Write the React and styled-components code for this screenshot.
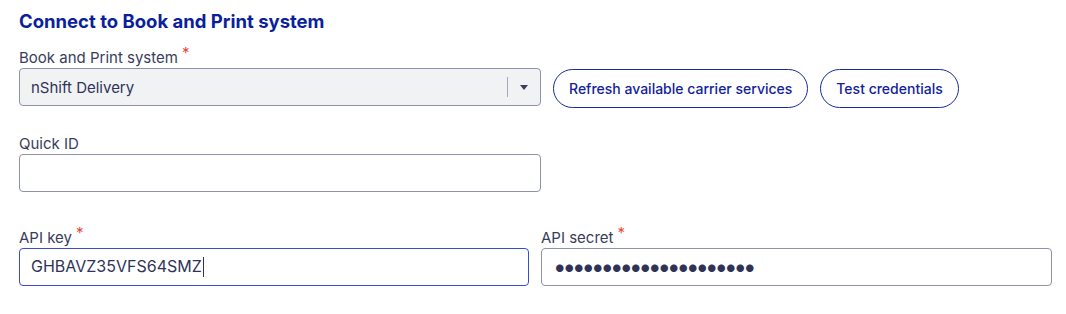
import React from 'react';
import styled, { createGlobalStyle } from 'styled-components';

const GlobalStyle = createGlobalStyle`
  body {
    margin: 0;
    background: #ffffff;
    font-family: Inter, "Noto Sans", "Liberation Sans", sans-serif;
  }
`;

const Page = styled.div`
  padding: 10px 14px 0 19px;
  width: 1033px;
`;

const Title = styled.h2`
  margin: 0 0 16px;
  font-size: 18.5px;
  line-height: 22px;
  font-weight: 700;
  color: #0b1f9c;
`;

const Row = styled.div`
  display: flex;
  align-items: flex-start;
  gap: 12px;
  margin-bottom: ${(p) => p.$mb || 0}px;
`;

const Field = styled.div`
  display: flex;
  flex-direction: column;
  width: ${(p) => p.$w}px;
`;

const Label = styled.label`
  font-size: 15px;
  line-height: 20px;
  color: #393d5c;
`;

const Required = styled.span`
  color: #e8473d;
  font-size: 15px;
  margin-left: 4px;
  position: relative;
  top: -5px;
`;

const Box = styled.div`
  box-sizing: border-box;
  height: 38px;
  display: flex;
  align-items: center;
  border: 1px solid ${(p) => (p.$focus ? '#3a4bd3' : '#8e93aa')};
  border-radius: 4px;
  background: ${(p) => (p.$disabled ? '#f1f2f4' : '#ffffff')};
  padding-left: 11px;
  font-size: ${(p) => p.$size || 15}px;
  color: #3a3e5e;
`;

const Input = styled.input`
  box-sizing: border-box;
  height: 38px;
  width: 100%;
  border: 1px solid #8e93aa;
  border-radius: 4px;
  background: #ffffff;
  padding: 0 11px;
  font-family: inherit;
  font-size: 15px;
  color: #2f3457;
  outline: none;
`;

const Value = styled.span`
  flex: 1;
  color: #2f3457;
`;

const Caret = styled.span`
  display: inline-block;
  width: 1px;
  height: 20px;
  background: #2f3457;
  vertical-align: middle;
  margin-left: 1px;
  position: relative;
  top: -1px;
`;

const Indicator = styled.div`
  display: flex;
  align-items: center;
  height: 100%;
`;

const Divider = styled.span`
  width: 1px;
  height: 20px;
  background: #a4a8ba;
`;

const Arrow = styled.span`
  width: 32px;
  display: flex;
  justify-content: center;
  &::after {
    content: '';
    border-left: 4.5px solid transparent;
    border-right: 4.5px solid transparent;
    border-top: 5px solid #3a3e5e;
  }
`;

const Buttons = styled.div`
  display: flex;
  gap: 12px;
  padding-top: 21px;
`;

const Button = styled.button`
  box-sizing: border-box;
  height: 39px;
  padding: 0 15px;
  border: 1px solid #1a2a9e;
  border-radius: 20px;
  background: #ffffff;
  color: #13239a;
  font-family: inherit;
  font-size: 14px;
  font-weight: 500;
  cursor: pointer;
`;

const Dots = styled.span`
  font-size: 24px;
  line-height: 1;
  letter-spacing: -4px;
  color: #2f3457;
`;

export default function App() {
  return (
    <Page>
      <GlobalStyle />
      <Title>Connect to Book and Print system</Title>

      <Row $mb={26}>
        <Field $w={522}>
          <Label>
            Book and Print system<Required>*</Required>
          </Label>
          <Box $disabled>
            <Value>nShift Delivery</Value>
            <Indicator>
              <Divider />
              <Arrow />
            </Indicator>
          </Box>
        </Field>
        <Buttons>
          <Button>Refresh available carrier services</Button>
          <Button>Test credentials</Button>
        </Buttons>
      </Row>

      <Row $mb={36}>
        <Field $w={522}>
          <Label>Quick ID</Label>
          <Input type="text" defaultValue="" />
        </Field>
      </Row>

      <Row>
        <Field $w={510}>
          <Label>
            API key<Required>*</Required>
          </Label>
          <Box $focus $size={16}>
            <Value>
              GHBAVZ35VFS64SMZ
              <Caret />
            </Value>
          </Box>
        </Field>
        <Field $w={511}>
          <Label>
            API secret<Required>*</Required>
          </Label>
          <Box>
            <Dots>{'\u2022'.repeat(21)}</Dots>
          </Box>
        </Field>
      </Row>
    </Page>
  );
}
